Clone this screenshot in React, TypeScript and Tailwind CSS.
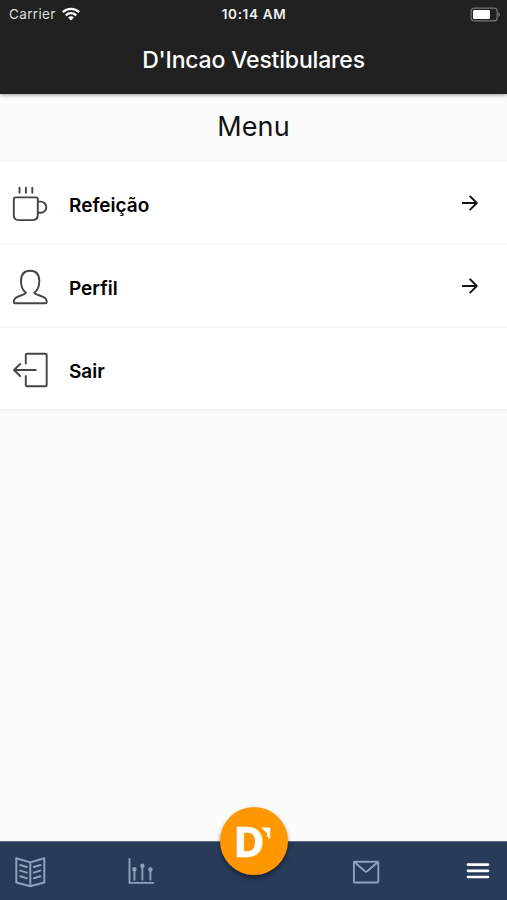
import type { ReactNode } from "react";

interface MenuItem {
  id: number;
  title: string;
  icon: ReactNode;
  hasArrow: boolean;
}

const iconProps = {
  fill: "none",
  stroke: "currentColor",
  strokeLinecap: "round" as const,
  strokeLinejoin: "round" as const,
};

const CupIcon = () => (
  <svg width="36" height="36" viewBox="0 0 36 36" strokeWidth="1.9" {...iconProps}>
    <path d="M7.5 1.8v5M13.9 1.8v5M20.3 1.8v5" />
    <path d="M3.6 11.4h20.4q1.8 0 1.8 1.8v15.9q0 5-5 5h-14q-5 0-5-5V13.2q0-1.8 1.8-1.8Z" />
    <path d="M26.1 15.6h2.6a5.6 5.6 0 0 1 0 11.2h-2.6" />
  </svg>
);

const PersonIcon = () => (
  <svg width="36" height="36" viewBox="0 0 36 36" strokeWidth="1.9" {...iconProps}>
    <path d="M13.9 23.8C10.5 21.1 9 17.4 9 12.2 9 5.2 12.2 1.7 18.1 1.7s9.2 3.5 9.2 10.5c0 5.2-1.6 8.9-5 11.6.4.9 2.3 1.6 5.3 2.7 4.8 1.8 7.2 2.8 7.2 6.4 0 1-.6 1.4-1.6 1.4H3.4c-1 0-1.6-.4-1.6-1.4 0-3.6 2.4-4.6 7-6.4 2.8-1.1 4.7-1.8 5.1-2.7Z" />
  </svg>
);

const ExitIcon = () => (
  <svg width="36" height="36" viewBox="0 0 36 36" strokeWidth="1.9" {...iconProps}>
    <path d="M13.8 11.5V3q0-1.3 1.3-1.3h18.3q1.3 0 1.3 1.3v30q0 1.3-1.3 1.3H15.1q-1.3 0-1.3-1.3v-9" />
    <path d="M23.8 18H2M8.2 12l-6.2 6 6.2 6" />
  </svg>
);

const ArrowIcon = () => (
  <svg width="18" height="18" viewBox="0 0 18 18" strokeWidth="1.9" {...iconProps} strokeLinecap="square">
    <path d="M2 9h13.5M9.3 2.5 15.8 9l-6.5 6.5" />
  </svg>
);

const BookIcon = () => (
  <svg width="32" height="32" viewBox="0 0 32 32" strokeWidth="2" {...iconProps}>
    <path d="M2.3 2.3 16.3 6.4 30.3 2.3v24.2L16.3 30.2 2.3 26.5ZM16.3 6.4v23.8" />
    <path d="m6.2 9 6.6 2M6.2 14.6l6.6 2M6.2 20.2l6.6 2M26.4 9l-6.6 2M26.4 14.6l-6.6 2M26.4 20.2l-6.6 2" />
  </svg>
);

const ChartIcon = () => (
  <svg width="28" height="28" viewBox="0 0 28 28" strokeWidth="1.9" {...iconProps}>
    <path d="M2.5 1.9v24h23.9" />
    <path d="M7.4 12v10.8M15.4 9v13.8M23.4 12v10.8" />
    <circle cx="7.4" cy="12.3" r="1.3" fill="currentColor" />
    <circle cx="15.4" cy="8.7" r="1.3" fill="currentColor" />
    <circle cx="23.4" cy="12.5" r="1.3" fill="currentColor" />
  </svg>
);

const MailIcon = () => (
  <svg width="28" height="24" viewBox="0 0 28 24" strokeWidth="1.9" {...iconProps}>
    <rect x="1.9" y="1.7" width="24.4" height="20.8" rx=".8" />
    <path d="m2.6 2.3 10.4 9q1.1.9 2.2 0l10.4-9" />
  </svg>
);

const menuItems: MenuItem[] = [
  { id: 1, title: "Refeição", icon: <CupIcon />, hasArrow: true },
  { id: 2, title: "Perfil", icon: <PersonIcon />, hasArrow: true },
  { id: 3, title: "Sair", icon: <ExitIcon />, hasArrow: false },
];

const StatusBar = () => (
  <div className="grid h-7 grid-cols-3 items-center pl-[9px] pr-[6px] text-[13.5px] text-[#f0f0f0]">
    <div className="flex items-center gap-1.5">
      <span className="tracking-[0.35px] text-[#dedede]">Carrier</span>
      <svg width="18" height="14" viewBox="0 0 18 14" fill="none" stroke="#fff" strokeWidth="2.3">
        <path d="M.8 5.1a11.8 11.8 0 0 1 16.4 0M3.8 8.3a7.5 7.5 0 0 1 10.4 0" />
        <path d="M6 10.5a4.2 4.2 0 0 1 6 0l-3 3Z" fill="#fff" stroke="none" />
      </svg>
    </div>
    <span className="-ml-[2px] whitespace-nowrap text-center font-semibold tracking-[0.65px]">10:14 AM</span>
    <svg className="justify-self-end" width="31" height="15" viewBox="0 0 31 15" fill="none">
      <rect x="1.1" y="1.1" width="26" height="12.8" rx="3" stroke="#777" strokeWidth="1.2" />
      <rect x="3" y="3" width="17" height="9" rx="1.2" fill="#fff" />
      <path d="M28.3 5q3.4 2.5 0 5Z" fill="#777" />
    </svg>
  </div>
);

const TabBar = () => (
  <nav className="relative flex h-[59px] shrink-0 items-center border-t border-[#60708a] bg-[#283b59] text-[#8fa1ba]">
    <div className="ml-[14px] mt-[2px]"><BookIcon /></div>
    <div className="ml-[81px]"><ChartIcon /></div>
    <div className="ml-[197px] mt-px"><MailIcon /></div>
    <svg className="-mt-px ml-[86px]" width="24" height="20" viewBox="0 0 24 20" stroke="#fff" strokeWidth="2.7" strokeLinecap="round">
      <path d="M2 3.6h20M2 9.8h20M2 16h20" />
    </svg>

    {/* Round home button over the bar */}
    <div className="absolute -top-[35px] left-[220px] size-[68px] rounded-full bg-[#ff9800] shadow-[0_3px_5px_rgba(0,0,0,0.4)]">
      <span className="absolute left-[13.5px] top-[13px] font-['Open_Sans'] text-[42px] font-bold leading-[42px] text-white [-webkit-text-stroke:0.6px_#fff]">
        D
      </span>
      <svg className="absolute left-[38px] top-[17px]" width="16" height="16" viewBox="0 0 16 16">
        <path d="M0 3.4 2.6 3.2 8.6 9.4V16L5.6 10Z" fill="#ff9800" />
        <path d="M2.9 3.4h9.3v11.8L9.1 12.2V9.1Z" fill="#fff" />
      </svg>
    </div>
  </nav>
);

const App = () => {
  return (
    <div className="flex h-[900px] w-full flex-col overflow-hidden bg-[#fbfbfb] font-['Inter',sans-serif]">
      <header className="relative h-[94px] shrink-0 bg-[#212121] shadow-[0_1px_4px_rgba(0,0,0,0.4)]">
        <StatusBar />
        <h1 className="mt-[15px] text-center text-[23px] font-medium leading-[34px] tracking-[-0.18px] text-white">
          D'Incao Vestibulares
        </h1>
      </header>

      <main className="grow">
        <h2 className="h-[66px] pt-[15px] text-center text-[27px] leading-9 tracking-[0.1px] text-[#111]">Menu</h2>
        <ul className="border-t-2 border-[#f6f6f6]">
          {menuItems.map(item => (
            <li
              key={item.id}
              className="flex h-[83px] items-center border-b-2 border-[#f6f6f6] bg-white pl-3 pr-7 text-[#444]"
            >
              <span className="mt-[2px]">{item.icon}</span>
              <span className="ml-[21px] mt-2 grow text-[19px] font-semibold text-black">{item.title}</span>
              {item.hasArrow && <span className="text-[#161616]"><ArrowIcon /></span>}
            </li>
          ))}
        </ul>
      </main>

      <TabBar />
    </div>
  );
};

export default App;
